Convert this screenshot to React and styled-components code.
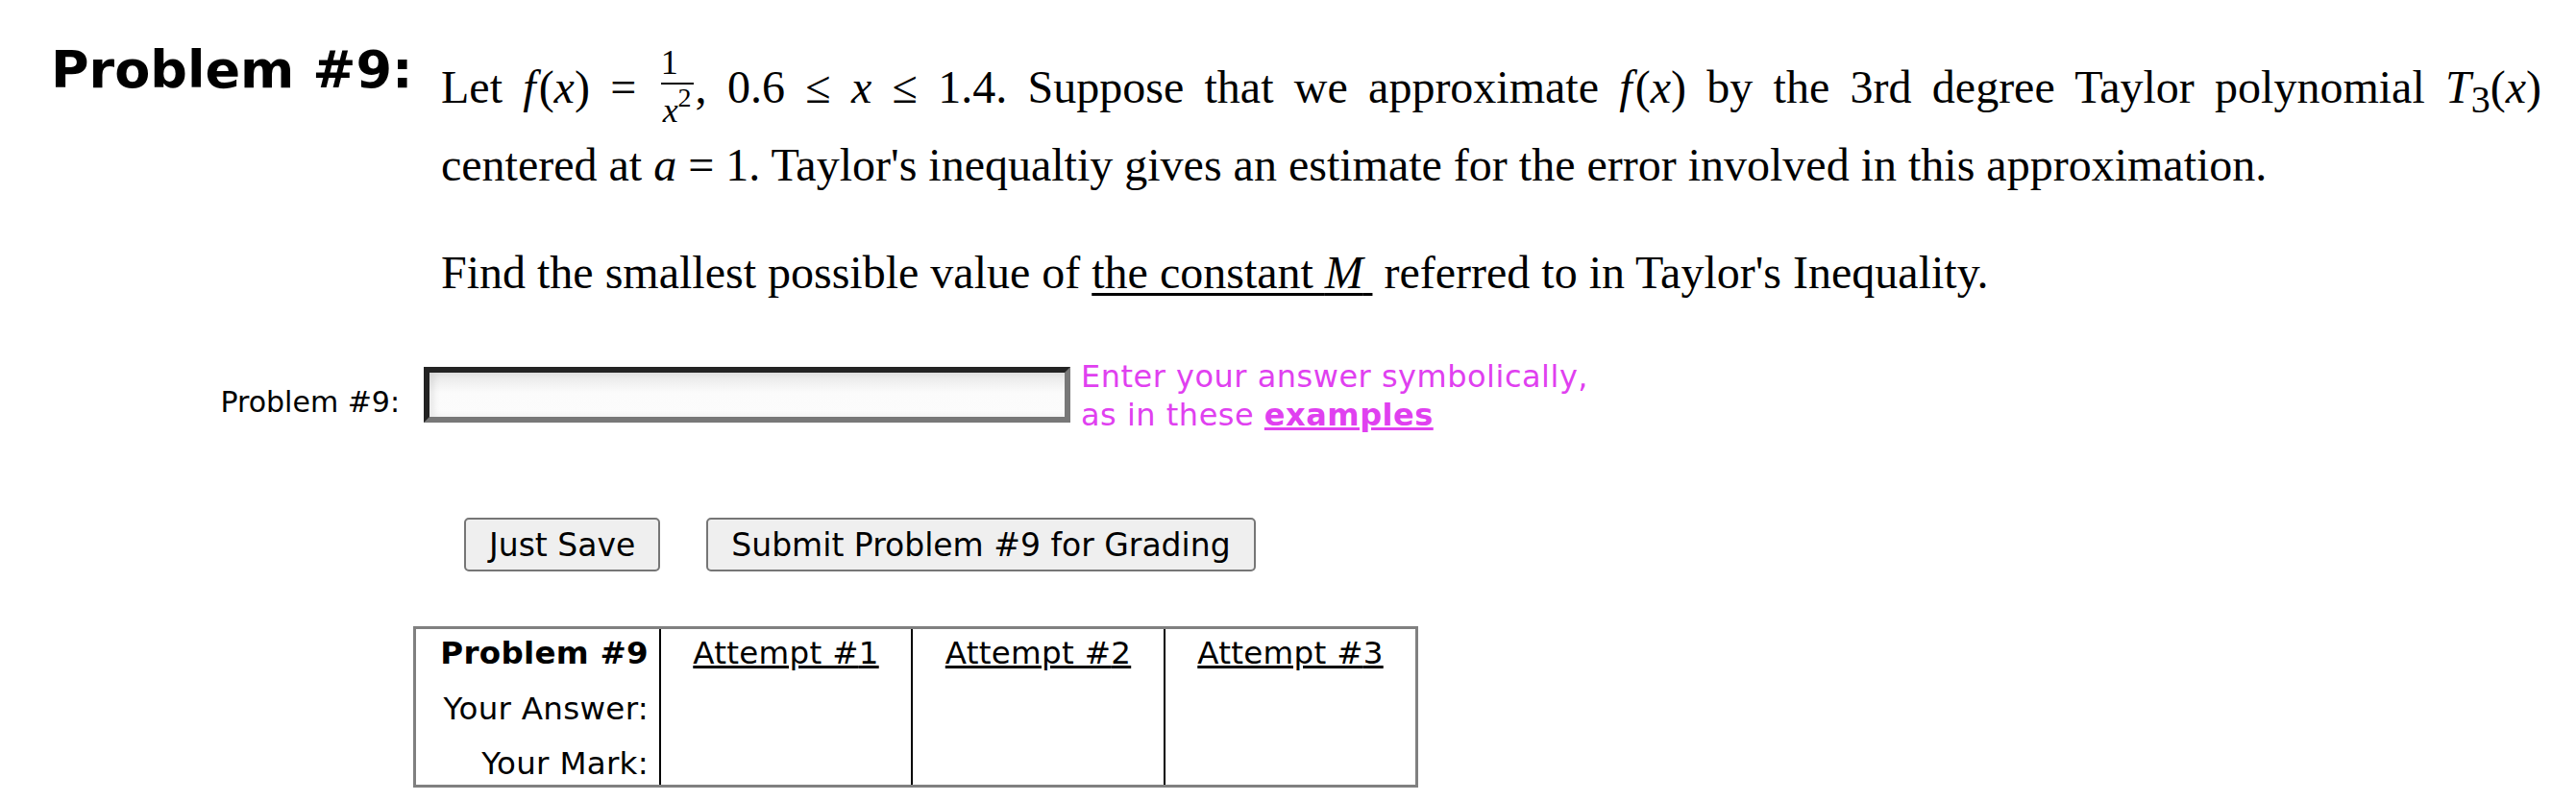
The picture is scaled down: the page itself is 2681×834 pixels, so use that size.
import styled, { createGlobalStyle } from "styled-components";

const SANS = `"DejaVu Sans", Verdana, sans-serif`;
const SERIF = `"Liberation Serif", "Times New Roman", serif`;

const GlobalStyle = createGlobalStyle`
  html, body {
    margin: 0;
    padding: 0;
    background: #fff;
  }
  body {
    font-family: ${SANS};
    color: #000;
  }
`;

const Page = styled.div`
  width: 2681px;
  height: 834px;
  box-sizing: border-box;
  padding: 46px 0 0 53px;
  overflow: hidden;
`;

const Statement = styled.div`
  display: flex;
  align-items: flex-start;
`;

const Heading = styled.h2`
  flex: 0 0 406px;
  margin: 0;
  font: bold 54px/54px ${SANS};
`;

const Text = styled.div`
  width: 2186px;
  margin-top: 4px;
  font: 48px/81px ${SERIF};
`;

const Line = styled.div`
  text-align: ${(p) => (p.$justify ? "justify" : "left")};
  text-align-last: ${(p) => (p.$justify ? "justify" : "auto")};
  margin-top: ${(p) => p.$gap || 0}px;
`;

const V = styled.i`
  font-family: ${SERIF};
  font-style: italic;
  margin-right: ${(p) => p.$kern || 0}px;
`;

const Frac = styled.span`
  display: inline-flex;
  flex-direction: column;
  text-align: center;
  vertical-align: 30px;
  font-family: ${SERIF};
  font-size: 36px;
  margin: 0 2px 0 4px;
`;

const Num = styled.span`
  display: block;
  line-height: 26px;
  padding-bottom: 8px;
  border-bottom: 2px solid #000;
`;

const Den = styled.span`
  display: block;
  line-height: 28px;
  padding: 13px 2px 0;
`;

const Sup = styled.span`
  font-size: 28px;
  line-height: 0;
  vertical-align: 16px;
`;

const Sub = styled.span`
  font-size: 40px;
  line-height: 0;
  vertical-align: -10px;
`;

const Under = styled.span`
  text-decoration: underline;
  text-decoration-thickness: 3px;
  text-underline-offset: 5px;
`;

const AnswerRow = styled.div`
  display: flex;
  align-items: flex-start;
  margin-top: 48px;
`;

const Label = styled.label`
  flex: 0 0 363px;
  margin: 29px 25px 0 0;
  text-align: right;
  font: 30px/36px ${SANS};
`;

const AnswerInput = styled.input`
  width: 673px;
  height: 58px;
  box-sizing: border-box;
  margin: 10px 0 0;
  padding: 0 6px;
  border: 6px solid;
  border-color: #232323 #787878 #787878 #232323;
  background: linear-gradient(#e6e6e6, #fbfbfb 45%, #fcfcfc);
  box-shadow: inset 5px 0 7px rgba(0, 0, 0, 0.08);
  outline: none;
  font: 30px ${SANS};
`;

const Hint = styled.div`
  margin-left: 11px;
  font: 32px/40px ${SANS};
  letter-spacing: 0.5px;
  color: #e040f0;
`;

const HintLink = styled.a`
  color: #e040f0;
  font-weight: bold;
  text-decoration: underline;
`;

const ButtonRow = styled.div`
  display: flex;
  gap: 48px;
  margin-top: 87px;
  padding-left: 430px;
`;

const Button = styled.button`
  height: 56px;
  box-sizing: border-box;
  padding: 0 24px;
  border: 2px solid #767676;
  border-radius: 5px;
  background: #efefef;
  color: #000;
  font: 33px/1 ${SANS};
`;

const Attempts = styled.div`
  display: flex;
  width: max-content;
  margin: 57px 0 0 377px;
  border: 3px solid #808080;
  font: 32.5px/44px ${SANS};
  letter-spacing: 0.3px;
`;

const Column = styled.div`
  width: ${(p) => p.$width}px;
  box-sizing: border-box;
  padding: 3px ${(p) => (p.$head ? 11 : 0)}px 0 0;
  border-left: ${(p) => (p.$head ? "none" : "2px solid #000")};
  text-align: ${(p) => (p.$head ? "right" : "center")};
`;

const Cell = styled.div`
  height: 57.5px;
  white-space: nowrap;
  font-weight: ${(p) => (p.$bold ? "bold" : "normal")};
  &:last-child {
    height: 44px;
  }
`;

const AttemptLink = styled.a`
  color: #000;
  text-decoration: underline;
`;

const attempts = [
  { n: 1, width: 262 },
  { n: 2, width: 263 },
  { n: 3, width: 262 },
];

export default function App() {
  return (
    <>
      <GlobalStyle />
      <Page>
        <Statement>
          <Heading>Problem #9:</Heading>
          <Text>
            <Line $justify>
              Let <V $kern={3}>f</V>(<V>x</V>) ={" "}
              <Frac>
                <Num>1</Num>
                <Den>
                  <V>x</V>
                  <Sup>2</Sup>
                </Den>
              </Frac>
              , 0.6 ≤ <V>x</V> ≤ 1.4. Suppose that we approximate{" "}
              <V $kern={3}>f</V>(<V>x</V>) by the 3rd degree Taylor polynomial{" "}
              <V>T</V>
              <Sub>3</Sub>(<V>x</V>)
            </Line>
            <Line>
              centered at <V>a</V> = 1. Taylor's inequaltiy gives an estimate
              for the error involved in this approximation.
            </Line>
            <Line $gap={31}>
              Find the smallest possible value of{" "}
              <Under>
                the constant <V>M</V>&thinsp;
              </Under>{" "}
              referred to in Taylor's Inequality.
            </Line>
          </Text>
        </Statement>

        <AnswerRow>
          <Label htmlFor="answer9">Problem #9:</Label>
          <AnswerInput id="answer9" type="text" />
          <Hint>
            Enter your answer symbolically,
            <br />
            as in these <HintLink href="#">examples</HintLink>
          </Hint>
        </AnswerRow>

        <ButtonRow>
          <Button>Just Save</Button>
          <Button>Submit Problem #9 for Grading</Button>
        </ButtonRow>

        <Attempts>
          <Column $head $width={253}>
            <Cell $bold>Problem #9</Cell>
            <Cell>Your Answer:</Cell>
            <Cell>Your Mark:</Cell>
          </Column>
          {attempts.map((a) => (
            <Column key={a.n} $width={a.width}>
              <Cell>
                <AttemptLink href="#">Attempt #{a.n}</AttemptLink>
              </Cell>
              <Cell />
              <Cell />
            </Column>
          ))}
        </Attempts>
      </Page>
    </>
  );
}
